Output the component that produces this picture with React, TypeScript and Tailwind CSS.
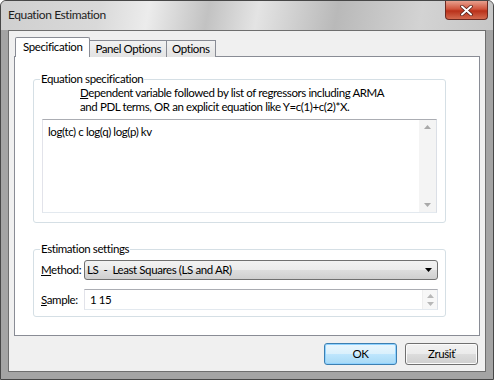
import React from "react";

const font = { fontFamily: 'Lato, "Noto Sans", sans-serif' };

function GroupBox({ label, className, children }: { label: string; className?: string; children: React.ReactNode }) {
  return (
    <div className={`relative border border-[#d5dfe5] rounded-[3px] ${className ?? ""}`}>
      <span className="absolute left-[6px] top-[-9px] bg-white px-[1px] leading-[16px]">{label}</span>
      {children}
    </div>
  );
}

function Arrow({ up, color = "#a9a9a9" }: { up?: boolean; color?: string }) {
  return (
    <svg width="7" height="4" viewBox="0 0 7 4">
      <path d={up ? "M0 4 L3.5 0 L7 4 Z" : "M0 0 L7 0 L3.5 4 Z"} fill={color} />
    </svg>
  );
}

export default function App() {
  return (
    <div style={font} className="w-[494px] h-[380px] text-[11.5px] tracking-[-0.4px] text-black bg-[#a4a4a4] border border-[#474747] rounded-t-[6px] flex flex-col overflow-hidden whitespace-nowrap">
      {/* title bar */}
      <div className="h-[29px] flex items-start justify-between bg-[linear-gradient(100deg,#cfcfcf_0%,#d9d9d9_20%,#ececec_30%,#c2c2c2_42%,#e4e4e4_52%,#b9b9b9_68%,#d3d3d3_85%,#c6c6c6_100%)]">
        <span className="pl-[7px] pt-[6px] leading-[16px] text-[12px] text-[#1e1e1e]">Equation Estimation</span>
        <div className="mr-[5px] w-[43px] h-[19px] rounded-b-[4px] border border-t-0 border-[#6b2a22] bg-[linear-gradient(#e8a08e_0%,#d0543c_45%,#b9311a_55%,#d36a4f_100%)] flex items-center justify-center">
          <svg width="13" height="11" viewBox="0 0 13 11">
            <path d="M2 1.5 L11 9.5 M11 1.5 L2 9.5" stroke="#4a1a12" strokeWidth="3.4" strokeLinecap="round" />
            <path d="M2 1.5 L11 9.5 M11 1.5 L2 9.5" stroke="#ffffff" strokeWidth="2" strokeLinecap="round" />
          </svg>
        </div>
      </div>

      {/* client area */}
      <div className="mx-[7px] w-[478px] h-[342px] bg-[#f0f0f0] border border-[#6e6e6e] flex flex-col px-[5px] pt-[6px]">
        {/* tabs */}
        <div className="flex items-end h-[20px] relative z-10 pl-[1px]">
          <div className="h-[20px] px-[7px] bg-white border border-b-0 border-[#898c95] rounded-t-[2px] leading-[18px]">Specification</div>
          <div className="h-[17px] px-[5px] bg-[linear-gradient(#f2f2f2,#e3e3e3)] border border-l-0 border-b-0 border-[#898c95] leading-[16px]">Panel Options</div>
          <div className="h-[17px] px-[5px] bg-[linear-gradient(#f2f2f2,#e3e3e3)] border border-l-0 border-b-0 border-[#898c95] leading-[16px]">Options</div>
        </div>
        <div className="-mt-[1px] h-[280px] bg-white border border-[#898c95] flex flex-col pl-[18px] pr-[33px] pt-[22px]">
          <GroupBox label="Equation specification" className="h-[144px] px-[8px] pt-[6px]">
            <div className="pl-[38px] leading-[14px]">
              <div><span className="underline">D</span>ependent variable followed by list of regressors including ARMA</div>
              <div>and PDL terms, OR an explicit equation like Y=c(1)+c(2)*X.</div>
            </div>
            <div className="mt-[5px] h-[94px] border border-[#abadb3] border-r-[#dbdfe6] border-b-[#e3e9ef] border-l-[#e2e3ea] flex">
              <div className="flex-1 px-[5px] pt-[4px] leading-[16px]">log(tc) c log(q) log(p) kv</div>
              <div className="w-[17px] bg-[#f4f4f4] flex flex-col justify-between items-center py-[5px]">
                <Arrow up />
                <Arrow />
              </div>
            </div>
          </GroupBox>

          <GroupBox label="Estimation settings" className="mt-[26px] h-[68px] px-[7px] pt-[10px]">
            <div className="flex items-center">
              <span className="w-[43px]"><span className="underline">M</span>ethod:</span>
              <div className="flex-1 h-[20px] rounded-[3px] border border-[#707070] bg-[linear-gradient(#f2f2f2_0%,#ebebeb_50%,#dddddd_51%,#cfcfcf_100%)] flex items-center justify-between pl-[2px] pr-[5px]">
                <span>LS&nbsp; -&nbsp; Least Squares (LS and AR)</span>
                <Arrow color="#000" />
              </div>
            </div>
            <div className="flex items-center mt-[9px]">
              <span className="w-[43px]"><span className="underline">S</span>ample:</span>
              <div className="flex-1 h-[21px] border border-[#abadb3] border-r-[#dbdfe6] border-b-[#e3e9ef] border-l-[#e2e3ea] flex items-center">
                <span className="flex-1 pl-[5px]">1 15</span>
                <div className="w-[15px] h-[19px] bg-[#f7f7f7] border-l border-[#eeeeee] flex flex-col justify-center items-center gap-[4px]">
                  <Arrow up color="#b8b8b8" />
                  <Arrow color="#b8b8b8" />
                </div>
              </div>
            </div>
          </GroupBox>
        </div>

        {/* buttons */}
        <div className="flex justify-end gap-[8px] mt-[7px] pr-[2px]">
          <button className="w-[73px] h-[22px] rounded-[3px] border border-[#3c7fb1] shadow-[inset_0_0_0_1px_#8fd2ff] bg-[linear-gradient(#eaf6fd_0%,#d9f0fc_50%,#bee6fd_51%,#a7d9f5_100%)] leading-[18px]">OK</button>
          <button className="w-[73px] h-[22px] rounded-[3px] border border-[#707070] shadow-[inset_0_0_0_1px_#fbfbfb] bg-[linear-gradient(#f2f2f2_0%,#ebebeb_50%,#dddddd_51%,#cfcfcf_100%)] leading-[18px]">Zrušiť</button>
        </div>
      </div>
    </div>
  );
}
